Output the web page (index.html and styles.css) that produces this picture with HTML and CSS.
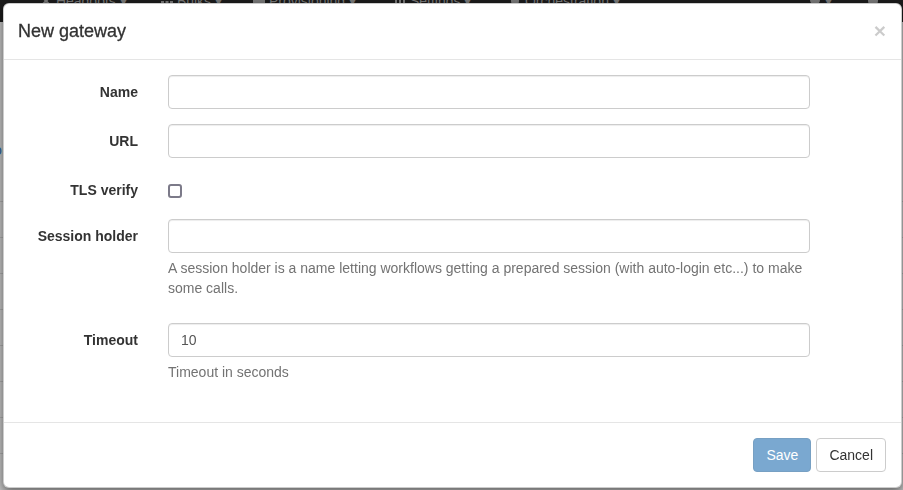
FILE: index.html
```html
<!DOCTYPE html>
<html lang="en">
<head>
<meta charset="utf-8">
<title>New gateway</title>
<link rel="stylesheet" href="styles.css">
</head>
<body>
<div class="page">
  <nav class="navbar">
    <span class="nav-item nav-w1"><svg class="nav-icon" viewBox="0 0 12 12"><path d="M2 2l8 8M10 2l-8 8" stroke="#7a7a7a" stroke-width="2"/></svg> Headoots ▾</span>
    <span class="nav-item nav-w2"><svg class="nav-icon" viewBox="0 0 12 12"><rect x="0" y="1" width="3" height="3" fill="#7a7a7a"/><rect x="4.5" y="1" width="3" height="3" fill="#7a7a7a"/><rect x="9" y="1" width="3" height="3" fill="#7a7a7a"/><rect x="0" y="6" width="3" height="3" fill="#7a7a7a"/><rect x="4.5" y="6" width="3" height="3" fill="#7a7a7a"/><rect x="9" y="6" width="3" height="3" fill="#7a7a7a"/></svg> Bulks ▾</span>
    <span class="nav-item nav-w3"><svg class="nav-icon" viewBox="0 0 12 12"><rect x="0" y="3" width="12" height="7" fill="#7a7a7a"/></svg> Provisioning ▾</span>
    <span class="nav-item nav-w4"><svg class="nav-icon" viewBox="0 0 12 12"><rect x="1" y="2" width="2" height="9" fill="#7a7a7a"/><rect x="5" y="4" width="2" height="7" fill="#7a7a7a"/><rect x="9" y="1" width="2" height="10" fill="#7a7a7a"/></svg> Settings ▾</span>
    <span class="nav-item"><svg class="nav-icon" viewBox="0 0 12 12"><circle cx="6" cy="6" r="4" fill="#7a7a7a"/></svg> Orchestration ▾</span>
    <span class="nav-spacer"></span>
    <span class="nav-item nav-w6"><svg class="nav-icon" viewBox="0 0 12 12"><circle cx="6" cy="5" r="5" fill="#7a7a7a"/></svg> ▾</span>
    <span class="nav-item"><svg class="nav-icon" viewBox="0 0 12 12"><circle cx="6" cy="6" r="5" fill="#7a7a7a"/></svg></span>
  </nav>
  <div class="page-body">
    <div class="page-link">o</div>
    <div class="page-row"></div>
    <div class="page-row"></div>
    <div class="page-row"></div>
    <div class="page-row"></div>
    <div class="page-row"></div>
    <div class="page-row"></div>
    <div class="page-row"></div>
    <div class="page-row"></div>
  </div>
</div>
<div class="backdrop"></div>
<div class="modal">
  <div class="modal-header">
    <h4 class="modal-title">New gateway</h4>
    <span class="close">×</span>
  </div>
  <form class="modal-body">
    <div class="form-group">
      <label class="control-label">Name</label>
      <div class="control"><input class="form-control" type="text"></div>
    </div>
    <div class="form-group">
      <label class="control-label">URL</label>
      <div class="control"><input class="form-control" type="text"></div>
    </div>
    <div class="form-group form-group-check">
      <label class="control-label">TLS verify</label>
      <div class="control check-wrap"><input class="check" type="checkbox"></div>
    </div>
    <div class="form-group">
      <label class="control-label">Session holder</label>
      <div class="control">
        <input class="form-control" type="text">
        <p class="help-block">A session holder is a name letting workflows getting a prepared session (with auto-login etc...) to make some calls.</p>
      </div>
    </div>
    <div class="form-group">
      <label class="control-label">Timeout</label>
      <div class="control">
        <input class="form-control" type="text" value="10">
        <p class="help-block">Timeout in seconds</p>
      </div>
    </div>
  </form>
  <div class="modal-footer">
    <button class="btn btn-primary" type="button" disabled>Save</button>
    <button class="btn btn-default" type="button">Cancel</button>
  </div>
</div>
</body>
</html>
```

FILE: styles.css
```css
* {
  box-sizing: border-box;
}

html, body {
  margin: 0;
  height: 100%;
}

body {
  font-family: "Liberation Sans", Arial, Helvetica, sans-serif;
  font-size: 14px;
  line-height: 20px;
  color: #333;
  background: #c2c2c2;
  overflow: hidden;
}

.page {
  height: 100%;
}

.navbar {
  height: 22px;
  background: #1c1c1c;
  display: flex;
  align-items: flex-end;
  overflow: hidden;
  color: #7a7a7a;
  font-size: 14px;
  line-height: 20px;
  padding-left: 40px;
  padding-right: 24px;
}

.nav-item {
  margin-bottom: 11px;
  white-space: nowrap;
  flex: none;
}

.nav-icon {
  width: 12px;
  height: 12px;
  vertical-align: -1px;
}

.nav-w1 { width: 121px; }
.nav-w2 { width: 92px; }
.nav-w3 { width: 141px; }
.nav-w4 { width: 115px; }
.nav-w6 { width: 58px; }

.nav-spacer {
  flex: 1;
}

.page-body {
  padding-top: 118px;
}

.page-link {
  color: #2a5f92;
  line-height: 20px;
  margin-left: -6px;
  height: 26px;
}

.page-row {
  height: 36px;
  border-bottom: 1px solid #aaaaaa;
}

.backdrop {
  position: fixed;
  inset: 0;
  background: rgba(0, 0, 0, 0.02);
}

.modal {
  position: fixed;
  top: 3px;
  left: 3px;
  width: 899px;
  background: #fff;
  border: 1px solid rgba(0, 0, 0, 0.2);
  border-radius: 6px;
  box-shadow: 0 3px 9px rgba(0, 0, 0, 0.5);
}

.modal-header {
  display: flex;
  align-items: center;
  justify-content: space-between;
  padding: 15px 15px 15px 14px;
  border-bottom: 1px solid #e5e5e5;
}

.modal-title {
  margin: 0;
  font-size: 18px;
  font-weight: 500;
  line-height: 25px;
  color: #333;
  -webkit-text-stroke: 0.3px #333;
}

.close {
  font-size: 21px;
  font-weight: bold;
  line-height: 1;
  color: #000;
  opacity: 0.2;
  margin-top: -2px;
}

.modal-body {
  margin: 0;
  padding: 15px;
}

.form-group {
  display: grid;
  grid-template-columns: 119px 642px;
  column-gap: 30px;
  margin-bottom: 15px;
}

.form-group-check {
  min-height: 31px;
}

.control-label {
  font-weight: bold;
  text-align: right;
  padding-top: 7px;
}

.form-control {
  display: block;
  width: 100%;
  height: 34px;
  padding: 6px 12px;
  font-family: inherit;
  font-size: 14px;
  line-height: 20px;
  color: #555;
  background: #fff;
  border: 1px solid #ccc;
  border-radius: 4px;
  box-shadow: inset 0 1px 1px rgba(0, 0, 0, 0.075);
  outline: none;
}

.check-wrap {
  padding-top: 11px;
}

.check {
  appearance: none;
  -webkit-appearance: none;
  display: block;
  margin: 0;
  width: 14px;
  height: 14px;
  border: 2px solid #7c7a89;
  border-radius: 3px;
  background: #fff;
}

.help-block {
  margin: 5px 0 10px;
  color: #737373;
}

.modal-footer {
  display: flex;
  justify-content: flex-end;
  gap: 5px;
  padding: 15px;
  border-top: 1px solid #e5e5e5;
}

.btn {
  font-family: inherit;
  font-size: 14px;
  line-height: 20px;
  padding: 6px 12px;
  border-radius: 4px;
  border: 1px solid transparent;
  height: 34px;
}

.btn-primary {
  color: #fff;
  background: #337ab7;
  border-color: #2e6da4;
  opacity: 0.65;
}

.btn-default {
  color: #333;
  background: #fff;
  border-color: #ccc;
}
```
